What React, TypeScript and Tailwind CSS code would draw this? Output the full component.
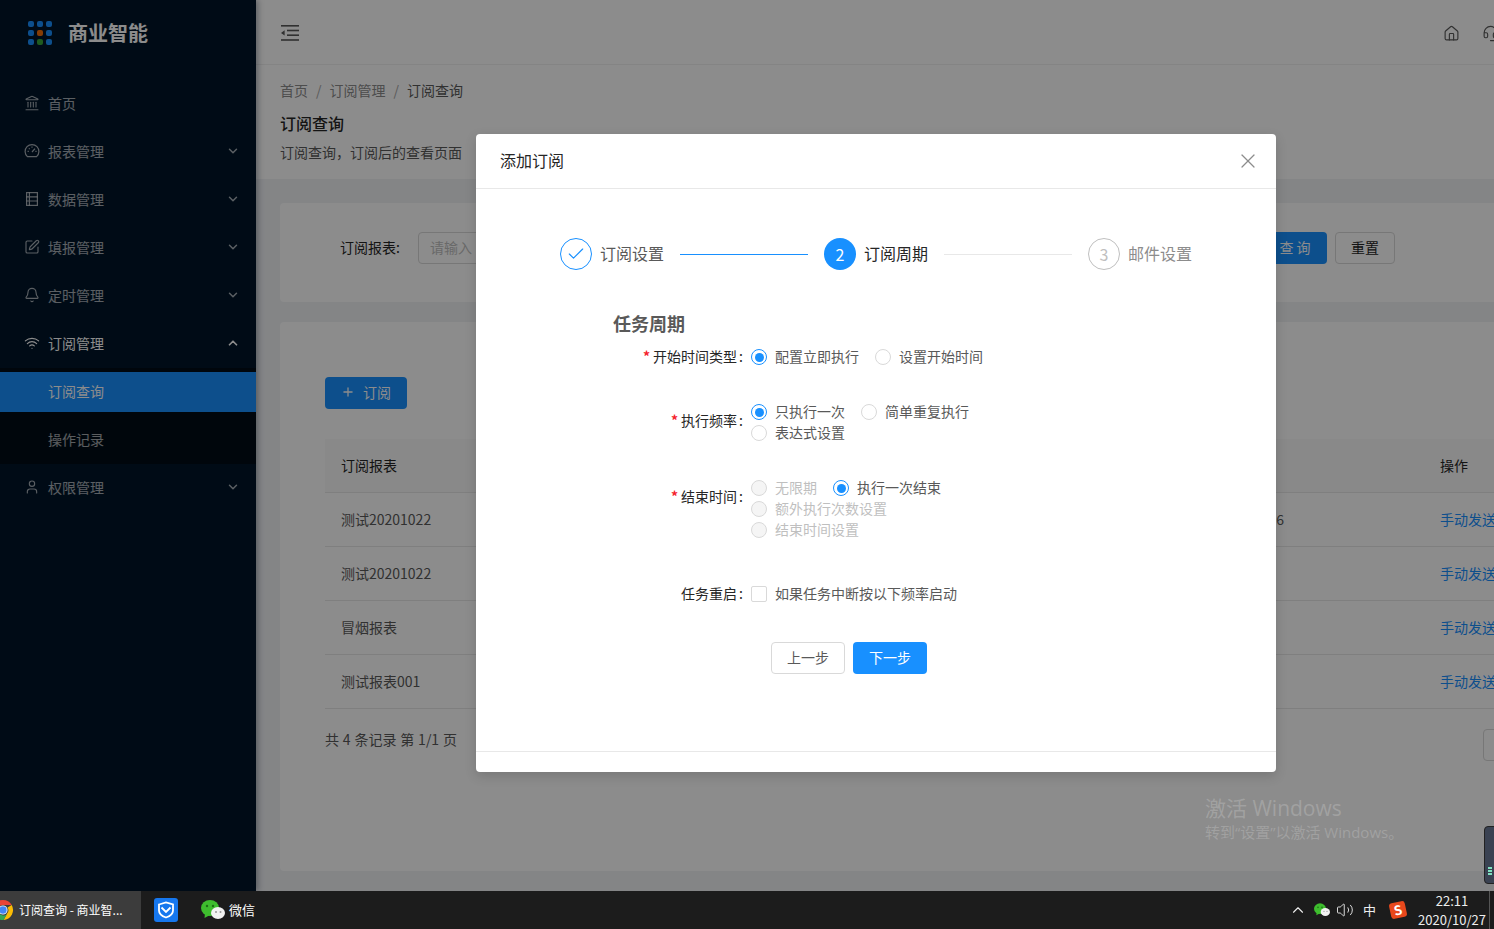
import React from 'react';
import { Landmark, SquarePen, Bell, Wifi, User, ChevronDown, ChevronUp, House, Headset, X, Check, Plus, Volume2 } from 'lucide-react';

const menuItems = [
  { label: '报表管理', icon: <DashIcon /> },
  { label: '数据管理', icon: <TableIcon /> },
  { label: '填报管理', icon: <SquarePen className="w-4 h-4" strokeWidth={1.7} /> },
  { label: '定时管理', icon: <Bell className="w-4 h-4" strokeWidth={1.7} /> },
];

const rows = ['测试20201022', '测试20201022', '冒烟报表', '测试报表001'];

function TableIcon() {
  return (
    <svg viewBox="0 0 16 16" className="w-4 h-4" fill="none" stroke="currentColor" strokeWidth="1.2">
      <rect x="2.6" y="1.6" width="10.8" height="12.8" />
      <path d="M2.6 5.8h10.8M2.6 10h10.8M5.4 1.6v12.8" />
    </svg>
  );
}

function DashIcon() {
  return (
    <svg viewBox="0 0 16 16" className="w-4 h-4" fill="none" stroke="currentColor" strokeWidth="1.2">
      <path d="M3.4 13.6A6.9 6.9 0 1 1 12.6 13.6z" />
      <path d="M8 9 11 5.6M3.6 8.4h1.2M8 3.6v1.2M11.4 8.4h1.2M4.9 5.3l.8.8" />
    </svg>
  );
}

function LogoDots() {
  const colors = ['#1890ff', '#1890ff', '#1890ff', '#1890ff', '#f5700a', '#1890ff', '#1890ff', '#3aa63a', '#1890ff'];
  return (
    <div className="grid grid-cols-3 gap-[3px] w-6 h-6">
      {colors.map((c, i) => (
        <span key={i} className="w-[6px] h-[6px] rounded-[2px]" style={{ backgroundColor: c }} />
      ))}
    </div>
  );
}

function Sidebar() {
  return (
    <aside className="w-[256px] shrink-0 h-full bg-[#001529] text-white/65 text-sm leading-[22px] shadow-[2px_0_6px_rgba(0,21,41,0.35)] z-10">
      <div className="h-[64px] pl-7 pt-[2px] flex items-center gap-4">
        <LogoDots />
        <span className="text-xl font-bold text-white">商业智能</span>
      </div>
      <div className="pt-5">
        <div className="h-10 mb-2 pl-6 pb-[2px] flex items-center gap-[8px]">
          <Landmark className="w-4 h-4" strokeWidth={1.6} />
          <span>首页</span>
        </div>
        {menuItems.map((item) => (
          <div key={item.label} className="h-10 mb-2 pl-6 pr-4 pb-[2px] flex items-center gap-2">
            {item.icon}
            <span className="flex-1">{item.label}</span>
            <ChevronDown className="w-[14px] h-[14px]" strokeWidth={2.5} />
          </div>
        ))}
        <div className="h-10 pl-6 pr-4 pb-[2px] flex items-center gap-2 text-white">
          <Wifi className="w-4 h-4" strokeWidth={1.7} />
          <span className="flex-1">订阅管理</span>
          <ChevronUp className="w-[14px] h-[14px]" strokeWidth={3} />
        </div>
        <div className="mt-1 bg-[#000c17] py-1">
          <div className="h-10 mb-2 pl-12 pb-[2px] flex items-center bg-[#1890ff] text-white">订阅查询</div>
          <div className="h-10 pl-12 pb-[2px] flex items-center">操作记录</div>
        </div>
        <div className="h-10 mt-1 pl-6 pr-4 pb-[2px] flex items-center gap-2">
          <User className="w-4 h-4" strokeWidth={1.7} />
          <span className="flex-1">权限管理</span>
          <ChevronDown className="w-[14px] h-[14px]" strokeWidth={2.5} />
        </div>
      </div>
    </aside>
  );
}

function Background() {
  return (
    <div className="flex-1 min-w-0 h-full flex flex-col overflow-hidden bg-[#f0f2f5] text-sm leading-[22px] text-[#595959]">
      <header className="h-[65px] shrink-0 bg-white border-b border-[#f0f0f0] pl-[25px] pt-[2px] flex items-center text-[#595959]">
        <svg viewBox="0 0 18 16" className="w-[18px] h-4 shrink-0" fill="currentColor">
          <rect x="0" y="0" width="18" height="1.6" />
          <rect x="6" y="4.7" width="12" height="1.6" />
          <rect x="6" y="9.4" width="12" height="1.6" />
          <rect x="0" y="14.2" width="18" height="1.6" />
          <path d="M0 7.9 3.6 5.2v5.4z" />
        </svg>
        <House className="w-[17px] h-[17px] ml-[1144px] shrink-0" strokeWidth={1.6} />
        <Headset className="w-[17px] h-[17px] ml-[22px] shrink-0" strokeWidth={1.6} />
      </header>
      <div className="h-[114px] shrink-0 bg-white pl-6 pt-[14px]">
        <div className="flex items-center text-[#8c8c8c]">
          <span>首页</span>
          <span className="mx-[8px] text-[#a6a6a6]">/</span>
          <span>订阅管理</span>
          <span className="mx-[8px] text-[#a6a6a6]">/</span>
          <span className="text-[#595959]">订阅查询</span>
        </div>
        <h1 className="mt-[10px] text-base leading-6 font-medium text-[#262626]">订阅查询</h1>
        <p className="mt-[6px] text-[#595959]">订阅查询，订阅后的查看页面</p>
      </div>
      <div className="w-[1400px] pl-6 pt-6">
        <section className="h-[99px] bg-white rounded pl-[60px] pt-[29px] flex items-start">
          <span className="w-[63px] mr-[15px] h-8 pb-[2px] flex items-center whitespace-nowrap text-[#262626]">订阅报表:</span>
          <div className="w-[829px] h-8 border border-[#d9d9d9] rounded pl-[11px] pb-[2px] flex items-center text-[#bfbfbf]">请输入</div>
          <div className="w-16 h-8 ml-4 rounded bg-[#1890ff] text-white flex items-center justify-center pb-[2px]">查 询</div>
          <div className="w-[60px] h-8 ml-2 rounded border border-[#d9d9d9] text-[#262626] flex items-center justify-center pb-[2px]">重置</div>
        </section>
        <section className="mt-5 h-[549px] bg-white rounded pl-[45px] pt-[55px]">
          <div className="w-[82px] h-8 rounded bg-[#1890ff] text-white flex items-center justify-center gap-2 pb-[2px]">
            <Plus className="w-[14px] h-[14px]" strokeWidth={2.2} />
            <span>订阅</span>
          </div>
          <div className="mt-[30px] h-[54px] bg-[#fafafa] border-b border-[#e8e8e8] pl-4 pb-[2px] flex items-center text-[#262626]">
            <span className="w-[1099px]">订阅报表</span>
            <span>操作</span>
          </div>
          {rows.map((name, i) => (
            <div key={i} className="h-[54px] border-b border-[#e8e8e8] pl-4 pb-[2px] flex items-center whitespace-nowrap">
              <span className="w-[300px]">{name}</span>
              <span className="w-[643px] text-right">{i === 0 ? '6' : ''}</span>
              <span className="ml-[156px] text-[#1890ff]">手动发送</span>
            </div>
          ))}
          <div className="mt-5 flex items-start">
            <span className="w-[1158px] -mt-px [word-spacing:0.7px]">共 4 条记录 第 1/1 页</span>
            <div className="w-8 h-8 rounded border border-[#d9d9d9]" />
          </div>
        </section>
      </div>
    </div>
  );
}

function Radio({ label, checked, disabled }: { label: string; checked?: boolean; disabled?: boolean }) {
  return (
    <span className={`flex items-center mr-4 ${disabled ? 'text-[#bfbfbf]' : 'text-[#595959]'}`}>
      <span
        className={`w-4 h-4 mr-2 rounded-full border flex items-center justify-center ${
          checked ? 'border-[#1890ff]' : disabled ? 'border-[#d9d9d9] bg-[#f5f5f5]' : 'border-[#d9d9d9]'
        }`}
      >
        {checked && <span className="w-[9px] h-[9px] rounded-full bg-[#1890ff]" />}
      </span>
      <span className="pb-[2px]">{label}</span>
    </span>
  );
}

function FormRow({ label, required, className, labelClass, children }: { label: string; required?: boolean; className?: string; labelClass: string; children: React.ReactNode }) {
  return (
    <div className={`flex items-start ${className ?? ''}`}>
      <div className={`w-[275px] shrink-0 text-right leading-5 text-[#262626] ${labelClass}`}>
        {required && <span className="text-[#f5222d] mr-[3px] font-bold">*</span>}
        {label}
        <span className="ml-[2px] mr-2">:</span>
      </div>
      <div className="flex-1 flex flex-col gap-px">{children}</div>
    </div>
  );
}

function Step({ n, label, state }: { n: number; label: string; state: 'done' | 'active' | 'wait' }) {
  return (
    <div className="flex items-center gap-2 shrink-0">
      {state === 'done' && (
        <span className="w-8 h-8 rounded-full border border-[#1890ff] text-[#1890ff] flex items-center justify-center">
          <Check className="w-[20px] h-[20px]" strokeWidth={1.4} />
        </span>
      )}
      {state === 'active' && <span className="w-8 h-8 rounded-full bg-[#1890ff] text-white flex items-center justify-center text-base">{n}</span>}
      {state === 'wait' && <span className="w-8 h-8 rounded-full border border-[#bfbfbf] text-[#bfbfbf] flex items-center justify-center text-base">{n}</span>}
      <span className={`text-base pb-[2px] ${state === 'active' ? 'text-[#262626]' : state === 'done' ? 'text-[#595959]' : 'text-[#8c8c8c]'}`}>{label}</span>
    </div>
  );
}

function Modal() {
  return (
    <div className="absolute left-[476px] top-[134px] w-[800px] h-[638px] bg-white rounded flex flex-col text-sm leading-[21px] shadow-[0_4px_12px_rgba(0,0,0,0.15)] z-30">
      <div className="h-[55px] shrink-0 border-b border-[#e8e8e8] px-6 flex items-center justify-between">
        <span className="text-base text-[#262626] pb-[2px]">添加订阅</span>
        <X className="w-6 h-6 -mr-2 text-[#8c8c8c]" strokeWidth={1.2} />
      </div>
      <div className="flex-1 pt-[49px]">
        <div className="pl-[84px] flex items-center">
          <Step n={1} label="订阅设置" state="done" />
          <span className="w-32 h-px mx-4 bg-[#1890ff]" />
          <Step n={2} label="订阅周期" state="active" />
          <span className="w-32 h-px mx-4 bg-[#e8e8e8]" />
          <Step n={3} label="邮件设置" state="wait" />
        </div>
        <h2 className="mt-[41px] pl-[137px] text-lg leading-6 font-bold text-[#595959]">任务周期</h2>
        <FormRow label="开始时间类型" required className="mt-3" labelClass="-mt-px">
          <div className="flex h-5">
            <Radio label="配置立即执行" checked />
            <Radio label="设置开始时间" />
          </div>
        </FormRow>
        <FormRow label="执行频率" required className="mt-[35px]" labelClass="mt-2">
          <div className="flex h-5">
            <Radio label="只执行一次" checked />
            <Radio label="简单重复执行" />
          </div>
          <div className="flex h-5"><Radio label="表达式设置" /></div>
        </FormRow>
        <FormRow label="结束时间" required className="mt-[35px]" labelClass="mt-2">
          <div className="flex h-5">
            <Radio label="无限期" disabled />
            <Radio label="执行一次结束" checked />
          </div>
          <div className="flex h-5"><Radio label="额外执行次数设置" disabled /></div>
          <div className="flex h-5"><Radio label="结束时间设置" disabled /></div>
        </FormRow>
        <FormRow label="任务重启" className="mt-11" labelClass="-mt-px">
          <div className="flex items-center h-5 text-[#595959]">
            <span className="w-4 h-4 mr-2 rounded-[2px] border border-[#d9d9d9]" />
            <span className="pb-[2px]">如果任务中断按以下频率启动</span>
          </div>
        </FormRow>
        <div className="mt-[38px] pl-[295px] flex gap-2">
          <div className="w-[74px] h-8 rounded border border-[#d9d9d9] text-[#595959] flex items-center justify-center pb-[2px]">上一步</div>
          <div className="w-[74px] h-8 rounded bg-[#1890ff] text-white flex items-center justify-center pb-[2px]">下一步</div>
        </div>
      </div>
      <div className="h-[21px] shrink-0 border-t border-[#e8e8e8]" />
    </div>
  );
}

function ChromeIcon() {
  return (
    <svg viewBox="0 0 24 24" className="w-[22px] h-[22px] -ml-[8px] shrink-0">
      <path d="M12 1a11 11 0 0 1 9.5 5.5H12a5.5 5.5 0 0 0-5 3.2L3.4 5.2A11 11 0 0 1 12 1z" fill="#ea4335" />
      <path d="M21.5 6.5A11 11 0 0 1 12.6 23l4.2-7.6a5.5 5.5 0 0 0 .2-6.2z" fill="#fbbc05" />
      <path d="M3.4 5.2A11 11 0 0 0 12.6 23l3.7-6.3a5.5 5.5 0 0 1-8.8-2.7z" fill="#34a853" />
      <circle cx="12" cy="12" r="5" fill="#fff" />
      <circle cx="12" cy="12" r="4" fill="#4285f4" />
    </svg>
  );
}

function WeChatIcon({ size }: { size: string }) {
  return (
    <svg viewBox="0 0 24 20" className={size}>
      <ellipse cx="9" cy="8" rx="9" ry="8" fill="#3ebd2e" />
      <path d="M4 13 3.5 18 9 15z" fill="#3ebd2e" />
      <ellipse cx="17" cy="13" rx="7" ry="6" fill="#f2f2f2" />
      <circle cx="6" cy="6" r="1.2" fill="#1c6f14" />
      <circle cx="12" cy="6" r="1.2" fill="#1c6f14" />
      <circle cx="15" cy="12" r="1" fill="#999" />
      <circle cx="19.5" cy="12" r="1" fill="#999" />
    </svg>
  );
}

function Taskbar() {
  return (
    <footer className="h-[38px] shrink-0 bg-[#1c1c1c] flex items-center text-white text-xs">
      <div className="w-[141px] h-full bg-[#3c3c3c] flex items-center gap-[5px] overflow-hidden whitespace-nowrap">
        <ChromeIcon />
        <span>订阅查询 - 商业智...</span>
      </div>
      <svg viewBox="0 0 24 24" className="w-6 h-6 ml-[13px] shrink-0">
        <rect width="24" height="24" rx="3" fill="#1677ee" />
        <path d="M5 6.5 12 4.5l7 2v6c0 3.5-3.5 5.8-7 7-3.5-1.2-7-3.5-7-7z" fill="none" stroke="#fff" strokeWidth="1.8" />
        <path d="M7.5 9.5 12 14l4.5-4.5" fill="none" stroke="#fff" strokeWidth="1.8" />
      </svg>
      <WeChatIcon size="w-6 h-5 ml-[23px] shrink-0" />
      <span className="ml-1 text-[13px]">微信</span>
      <div className="ml-auto flex items-center text-[#eee]">
        <ChevronUp className="w-[18px] h-[18px]" strokeWidth={1.5} />
        <WeChatIcon size="w-4 h-[14px] ml-[7px]" />
        <Volume2 className="w-[18px] h-[18px] ml-[6px]" strokeWidth={1.2} />
        <span className="ml-[9px] text-[13px]">中</span>
        <span className="ml-[14px] w-4 h-4 rounded-[3px] bg-[#e8481c] -rotate-12 text-white text-[13px] leading-4 font-bold text-center">S</span>
        <div className="ml-[10px] w-[72px] text-center text-[13px] leading-[19px]">
          <div>22:11</div>
          <div>2020/10/27</div>
        </div>
        <span className="w-px h-[38px] ml-px mr-1 bg-[#555]" />
      </div>
    </footer>
  );
}

export default function App() {
  return (
    <div className="w-[1494px] h-[929px] flex flex-col overflow-hidden font-['Noto_Sans_CJK_SC','Noto_Sans',sans-serif]">
      <div className="relative flex-1 min-h-0 flex overflow-hidden">
        <Sidebar />
        <Background />
        <div className="absolute inset-0 bg-black/45 z-20" />
        <Modal />
        <div className="absolute left-[1205px] top-[794px] z-30 text-white/20 font-['Open_Sans','Noto_Sans_CJK_SC',sans-serif]">
          <div className="text-[21px] leading-7">激活 Windows</div>
          <div className="text-[15px] leading-5">转到“设置”以激活 Windows。</div>
        </div>
        <div className="absolute left-[1484px] top-[826px] w-4 h-[58px] rounded bg-[#3a4252] border border-[#222] pl-[3px] pt-[40px] z-30">
          <div className="w-1 h-[2px] bg-[#7fe0c0] mb-px" />
          <div className="w-1 h-[2px] bg-[#7fe0c0] mb-px" />
          <div className="w-1 h-[2px] bg-[#7fe0c0]" />
        </div>
      </div>
      <Taskbar />
    </div>
  );
}
